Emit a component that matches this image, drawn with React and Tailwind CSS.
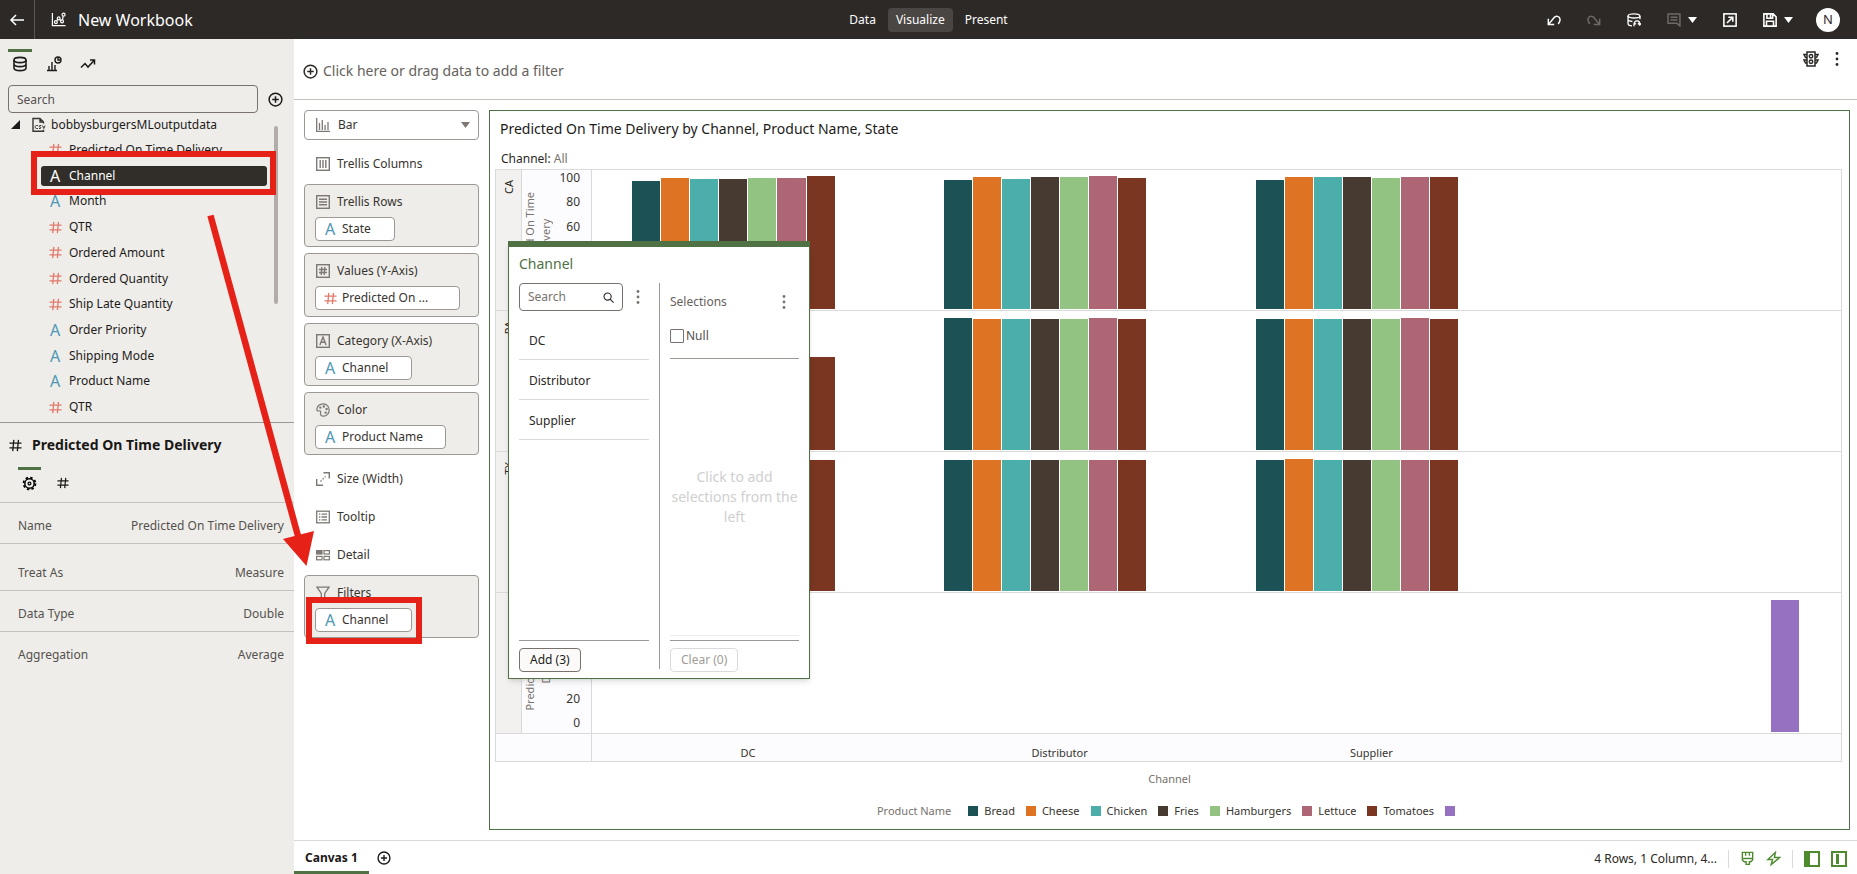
import React from "react";

/* ---------- icons ---------- */

function Icon({ size = 16, className = "", children, sw = 1.3, box = 16 }) {
  return (
    <svg
      width={size}
      height={size}
      viewBox={`0 0 ${box} ${box}`}
      fill="none"
      stroke="currentColor"
      strokeWidth={sw}
      className={`shrink-0 ${className}`}
      aria-hidden="true"
    >
      {children}
    </svg>
  );
}

const BackArrow = () => (
  <Icon sw={1.5}>
    <path d="M15 8H2M7 3 2 8l5 5" />
  </Icon>
);
const WorkbookIcon = () => (
  <Icon size={15} sw={1.3}>
    <path d="M1.500 1v13.500H15.500" />
    <circle cx="5.200" cy="10.800" r="1.500" />
    <circle cx="8.200" cy="6.800" r="1.500" />
    <circle cx="11.800" cy="10" r="1.500" />
    <circle cx="13.400" cy="2.800" r="1.600" />
    <path d="m5.900 9.400 1.400-1.500M9.200 7.900l1.600 1.200M12.200 8.500l.8-4" />
  </Icon>
);
const DatabaseIcon = () => (
  <Icon sw={1.6}>
    <ellipse cx="8" cy="4" rx="6" ry="2.6" />
    <path d="M2 4v8c0 1.500 2.700 2.600 6 2.600s6-1.100 6-2.600V4M2 8c0 1.500 2.700 2.600 6 2.600S14 9.500 14 8" />
  </Icon>
);
const VizTabIcon = () => (
  <Icon sw={1.4}>
    <path d="M1 14.500h10M3 14V10M6 14V6M9 14V9" />
    <circle cx="12" cy="4" r="3" />
    <path d="M12 1.500V4h2.500" />
  </Icon>
);
const TrendIcon = () => (
  <Icon sw={1.5}>
    <path d="m1 11.500 4-4 3 3.500 6-6.500M10 4h4.500v4.500" />
  </Icon>
);
const PlusCircle = ({ size = 15, className = "" }) => (
  <Icon size={size} sw={1.6} className={className}>
    <circle cx="8" cy="8" r="6.800" />
    <path d="M8 4.500v7M4.500 8h7" />
  </Icon>
);
const CsvFile = () => (
  <Icon sw={1.400} className="text-[#3a3632]">
    <path d="M4 14.300H2V1.500h7L12.500 5v1.500M9 1.500V5h3.500M4 14.300h8.500v-1.500" />
    <path d="M7 8.500H5.500c-1 0-1.300.6-1.300 1.500s.3 1.500 1.300 1.500H7M10.300 8.500H9c-1.200 0-1.200 1.500 0 1.500s1.200 1.500 0 1.500H8M11.500 8.500l1.300 3 1.300-3" strokeWidth="1" />
  </Icon>
);
const HashIcon = ({ size = 13, className = "" }) => (
  <Icon size={size} box={14} sw={1.400} className={className}>
    <path d="M.5 4.500h13M.5 9.500h13M5.200 1 4 13M10.200 1 9 13" />
  </Icon>
);
const GearIcon = () => (
  <Icon size={15} sw={1.600} className="text-black">
    <circle cx="8" cy="8" r="5" />
    <circle cx="8" cy="8" r="1.500" strokeWidth="1.300" />
    <circle cx="8" cy="8" r="6.400" strokeWidth="1.800" strokeDasharray="2.600 2.430" />
  </Icon>
);
const BarSmall = () => (
  <Icon size={14} sw={1.3} box={14}>
    <path d="M.7 0v13.300H14M3.500 12V5M6.300 12V2M9.100 12V7M12 12V4" />
  </Icon>
);
const TrellisCols = () => (
  <Icon size={14} box={14} sw={1.400}>
    <rect x=".7" y=".7" width="12.600" height="12.600" />
    <path d="M4.200 3v8M7 3v8M9.800 3v8" />
  </Icon>
);
const TrellisRows = () => (
  <Icon size={14} box={14} sw={1.400}>
    <rect x=".7" y=".7" width="12.600" height="12.600" />
    <path d="M3 4.200h8M3 7h8M3 9.800h8" />
  </Icon>
);
const ValuesIcon = () => (
  <Icon size={14} box={14} sw={1.400}>
    <rect x=".7" y=".7" width="12.600" height="12.600" />
    <path d="M3 5.500h8M3 8.500h8M5.800 3 5.200 11M8.800 3 8.200 11" />
  </Icon>
);
const CategoryIcon = () => (
  <Icon size={14} box={14} sw={1.400}>
    <rect x=".7" y=".7" width="12.600" height="12.600" />
    <path d="m3.900 11 3.100-8 3.100 8M5 8.300h4" />
  </Icon>
);
const PaletteIcon = () => (
  <Icon size={14} box={14} sw={1.200}>
    <path d="M7.200.8C3.500.8.8 3.500.8 6.600c0 1.600 1.500 1.500 2.400 1.200 1.200-.3 1.800.6 1.400 1.800-.6 1.900.5 3.600 2.800 3.600 3.300 0 5.800-2.900 5.800-6.200S10.600.8 7.200.8Z" />
    <circle cx="4.300" cy="4.600" r=".6" />
    <circle cx="7.800" cy="3.500" r=".6" />
    <circle cx="10.600" cy="6" r=".6" />
    <circle cx="9.600" cy="9.600" r=".6" />
  </Icon>
);
const SizeIcon = () => (
  <Icon size={14} box={14} sw={1.400}>
    <path d="M.7 7v6.300H7M7.500.7h5.800v5.800" />
    <path d="m4.500 9.500 5-5" strokeDasharray="1.500 1.500" />
  </Icon>
);
const TooltipIcon = () => (
  <Icon size={14} box={14} sw={1.300}>
    <rect x=".7" y="1.200" width="12.600" height="11.600" />
    <path d="M3 4.200h1.300M3 7h1.300M3 9.800h1.300M5.500 4.200H11M5.500 7H11M5.500 9.800H11" />
  </Icon>
);
const DetailIcon = () => (
  <Icon size={14} box={14} sw={1.200}>
    <rect x=".6" y="2.600" width="5.400" height="3.400" fill="currentColor" />
    <rect x="8" y="2.600" width="5.400" height="3.400" />
    <rect x=".6" y="8.400" width="5.400" height="3.400" />
    <rect x="8" y="8.400" width="5.400" height="3.400" />
  </Icon>
);
const FilterIcon = () => (
  <Icon size={14} box={14} sw={1.300}>
    <path d="M1 1.200h12L8.700 7.500v4L5.300 13.500v-6Z" />
  </Icon>
);
const Kebab = ({ className = "" }) => (
  <svg width="4" height="16" viewBox="0 0 4 16" fill="currentColor" className={className} aria-hidden="true">
    <circle cx="2" cy="2.500" r="1.400" />
    <circle cx="2" cy="8" r="1.400" />
    <circle cx="2" cy="13.500" r="1.400" />
  </svg>
);
const TrafficLight = () => (
  <Icon size={16} sw={1.500}>
    <path d="M4 1h8v14H4zM4 3.500H1l1.500 3H4M4 9H1l1.500 3H4M12 3.500h3l-1.500 3H12M12 9h3l-1.500 3H12" />
    <circle cx="8" cy="5.200" r="1.700" />
    <circle cx="8" cy="10.800" r="1.700" />
  </Icon>
);
const UndoIcon = ({ className = "" }) => (
  <Icon size={14} sw={1.700} className={className}>
    <path d="M1.500 6.500v6.700h6.700M2 12.700 8.200 5.200c2-2.500 6-1.600 6.600 1.500.4 2-.5 3.900-2 5.800" />
  </Icon>
);
const CaretDown = ({ className = "" }) => (
  <svg width="9" height="6" viewBox="0 0 10 6" preserveAspectRatio="none" fill="currentColor" className={className} aria-hidden="true">
    <path d="M0 0h10L5 6z" />
  </svg>
);
const RefreshDataIcon = () => (
  <Icon size={14} sw={1.500}>
    <ellipse cx="8" cy="3.300" rx="6.800" ry="2.400" />
    <path d="M1.200 3.300v9c0 1.200 2 2.200 4.500 2.400M14.800 3.300V7M1.200 7.500c0 1.200 2 2 5 2.200" />
    <path d="M8 15.200V12.500h2.500M8.300 12c.4-2.300 2-3.200 3.500-3 1.700.2 2.700 1.400 2.700 3.300M12.500 11.800l2 2 1.500-2" />
  </Icon>
);
const NoteIcon = () => (
  <Icon size={14} sw={1.700}>
    <path d="M1.200 1.200h13.600v13.600L11.500 11.800H1.200z" />
    <path d="M4 4.800h8M4 8h8" />
  </Icon>
);
const ExportIcon = () => (
  <Icon size={14} sw={1.800}>
    <rect x="1" y="1" width="14" height="14" />
    <path d="M4.500 11.500 11 5M6 4.800h5.200V10" />
  </Icon>
);
const SaveIcon = () => (
  <Icon size={14} sw={1.800}>
    <path d="M1 1h10.500L15 4.500V15H1zM4.500 1v5h6.500V1M4 15V9.500h8V15M8.600 2v3" />
  </Icon>
);
const SearchIcon = () => (
  <Icon size={11} box={12} sw={1.200} className="text-[#2b2825]">
    <circle cx="5" cy="5" r="3.900" />
    <path d="m7.800 7.800 3.700 3.700" />
  </Icon>
);
const BrushIcon = () => (
  <Icon size={15} sw={1.500}>
    <path d="M2.500 1.500h11v8L11.500 11.500H10v2.800H6.500v-2.800h-2L2.500 9.500zM2.500 8h11M6 1.500V5M10 1.500V5" />
  </Icon>
);
const BoltIcon = () => (
  <Icon size={15} sw={1.500}>
    <path d="M10 1.500 2 9h5l-1.500 5.500L14.500 7H9z" />
  </Icon>
);

/* ---------- data ---------- */

const TREE = [
  ["#", "Predicted On Time Delivery"],
  ["A", "Channel", true],
  ["A", "Month"],
  ["#", "QTR"],
  ["#", "Ordered Amount"],
  ["#", "Ordered Quantity"],
  ["#", "Ship Late Quantity"],
  ["A", "Order Priority"],
  ["A", "Shipping Mode"],
  ["A", "Product Name"],
  ["#", "QTR"],
];

const PRODUCTS = [
  ["Bread", "#1c5156"],
  ["Cheese", "#de7423"],
  ["Chicken", "#4caeab"],
  ["Fries", "#473a31"],
  ["Hamburgers", "#92c382"],
  ["Lettuce", "#af6674"],
  ["Tomatoes", "#7a3620"],
  ["", "#9671c1"],
];

const AXIS_MAX = 103.7;

const ROWS = [
  {
    state: "CA",
    groups: [
      [95.5, 97.8, 97, 97, 97.8, 97.8, 99.3, 0],
      [96.3, 98.5, 97, 98.5, 98.5, 99.3, 97.8, 0],
      [96.3, 98.5, 98.5, 98.5, 97.8, 98.5, 98.5, 0],
      [0, 0, 0, 0, 0, 0, 0, 0],
    ],
  },
  {
    state: "PA",
    groups: [
      [97.8, 97.8, 97.8, 97.8, 97.8, 97.8, 69.4, 0],
      [98.5, 97.8, 97.8, 97.8, 97.8, 98.5, 97.8, 0],
      [97.8, 97.8, 97.8, 97.8, 97.8, 98.5, 97.8, 0],
      [0, 0, 0, 0, 0, 0, 0, 0],
    ],
  },
  {
    state: "TX",
    groups: [
      [97.8, 97.8, 97.8, 97.8, 97.8, 97.8, 97.8, 0],
      [97.8, 97.8, 97.8, 97.8, 97.8, 97.8, 97.8, 0],
      [97.8, 98.5, 97.8, 97.8, 97.8, 97.8, 97.8, 0],
      [0, 0, 0, 0, 0, 0, 0, 0],
    ],
  },
  {
    state: "",
    groups: [
      [0, 0, 0, 0, 0, 0, 0, 0],
      [0, 0, 0, 0, 0, 0, 0, 0],
      [0, 0, 0, 0, 0, 0, 0, 0],
      [0, 0, 0, 0, 0, 0, 0, 98.5],
    ],
  },
];

/* ---------- parts ---------- */

function TypeMark({ kind, inverse }) {
  if (kind === "#")
    return (
      <span className="flex w-[14px] shrink-0 justify-center">
        <HashIcon className="text-[#e27a6b]" />
      </span>
    );
  return (
    <span
      aria-hidden="true"
      className={`w-[14px] shrink-0 text-center text-base leading-4 ${inverse ? "text-white" : "text-[#4f97b4]"}`}
    >
      A
    </span>
  );
}

function Header() {
  return (
    <header className="flex h-[39px] shrink-0 items-center bg-[#2d2926] text-white">
      <div className="flex h-full flex-1 items-center">
        <button aria-label="Back" className="flex h-full w-[35px] items-center justify-center border-r border-[#5b5652]">
          <BackArrow />
        </button>
        <div className="flex items-center gap-3 pl-4">
          <WorkbookIcon />
          <h1 className="text-base leading-5">New Workbook</h1>
        </div>
      </div>
      <nav className="flex items-center gap-1 text-xs">
        <button className="h-6 px-2">Data</button>
        <button className="h-6 rounded-sm bg-[#4a4643] px-2">Visualize</button>
        <button className="h-6 px-2">Present</button>
      </nav>
      <div className="flex flex-1 items-center justify-end gap-[23px]">
        <div className="flex items-center gap-[26px]">
          <button aria-label="Undo"><UndoIcon /></button>
          <button aria-label="Redo" className="text-[#6f6a66]"><UndoIcon className="-scale-x-100" /></button>
          <button aria-label="Refresh data"><RefreshDataIcon /></button>
          <button aria-label="Notes" className="flex items-center gap-[7px]">
            <span className="text-[#6f6a66]"><NoteIcon /></span>
            <CaretDown />
          </button>
          <button aria-label="Export"><ExportIcon /></button>
          <button aria-label="Save" className="flex items-center gap-[7px]">
            <SaveIcon />
            <CaretDown />
          </button>
        </div>
        <button className="mr-[17px] flex size-6 items-center justify-center rounded-full bg-white text-[13px] text-[#2d2926]">N</button>
      </div>
    </header>
  );
}

function Property({ label, value, className = "" }) {
  return (
    <div className={`flex items-end justify-between pr-[10px] pb-[7px] pl-[18px] text-xs leading-5 text-[#55514d] ${className}`}>
      <dt>{label}</dt>
      <dd>{value}</dd>
    </div>
  );
}

function Sidebar() {
  return (
    <aside className="flex w-[294px] shrink-0 flex-col bg-[#eeedea]">
      <section className="flex h-[384px] flex-col border-b border-[#9b9793] px-2">
        <div className="mt-[10px] flex gap-[10px]">
          <button aria-label="Data" className="flex h-[27px] w-6 items-center justify-center border-t-[3px] border-[#4f7144]">
            <DatabaseIcon />
          </button>
          <button aria-label="Visualizations" className="flex h-[27px] w-6 items-center justify-center pt-[3px]">
            <VizTabIcon />
          </button>
          <button aria-label="Analytics" className="flex h-[27px] w-6 items-center justify-center pt-[3px]">
            <TrendIcon />
          </button>
        </div>
        <div className="mt-[9px] flex items-center gap-[10px]">
          <input
            aria-label="Search data"
            placeholder="Search"
            className="h-7 w-[250px] rounded border border-[#77726d] bg-transparent px-2 text-xs placeholder:text-[#55514d]"
          />
          <button aria-label="Add data"><PlusCircle /></button>
        </div>
        <div className="flex min-h-0 flex-1">
          <div className="flex flex-1 flex-col text-xs text-[#1d1b19]">
            <div className="flex h-[23px] items-center gap-[11px] pl-[3px]">
              <svg width="9" height="9" viewBox="0 0 9 9" fill="currentColor" aria-hidden="true"><path d="M9 0v9H0z" /></svg>
              <span className="flex items-center gap-1"><CsvFile />bobbysburgersMLoutputdata</span>
            </div>
            <ul className="flex flex-1 flex-col pt-px pb-[2px] pl-[33px]">
              {TREE.map(([kind, name, selected], i) => (
                <li key={i} className="flex flex-1 items-center">
                  <button
                    className={`flex h-5 w-[226px] items-center gap-[7px] rounded-[3px] pl-[7px] text-left ${selected ? "bg-[#312e29] text-white" : ""}`}
                  >
                    <TypeMark kind={kind} inverse={selected} />
                    {name}
                  </button>
                </li>
              ))}
            </ul>
          </div>
          <div className="mt-[13px] mr-2 h-[178px] w-1 rounded-sm bg-[#b3adaa]" />
        </div>
      </section>

      <section className="flex-1">
        <div className="flex items-center gap-[10px] pt-3 pl-[9px] text-[#1a1816]">
          <HashIcon />
          <h2 className="text-sm leading-5 font-bold">Predicted On Time Delivery</h2>
        </div>
        <div className="mt-3 flex gap-[10px] pl-[18px]">
          <button aria-label="General" className="flex h-[35px] w-[23px] justify-center border-t-[3px] border-[#4f7144] pt-1.5">
            <GearIcon />
          </button>
          <button aria-label="Number format" className="flex h-[35px] w-[23px] justify-center pt-[10px]">
            <HashIcon size={12} />
          </button>
        </div>
        <dl className="border-t border-[#c6c3bf]">
          <Property label="Name" value="Predicted On Time Delivery" className="h-[41px] border-b border-[#c6c3bf]" />
          <Property label="Treat As" value="Measure" className="h-[47px] border-b border-[#c6c3bf]" />
          <Property label="Data Type" value="Double" className="h-[41px] border-b border-[#c6c3bf]" />
          <Property label="Aggregation" value="Average" className="h-[40px]" />
        </dl>
      </section>
    </aside>
  );
}

function Slot({ icon, label, chip }) {
  if (!chip) {
    return (
      <div className="flex h-8 items-center gap-[7px] pt-[3px] pl-3 text-[#38342f]">
        <span className="text-[#7d7874]">{icon}</span>
        {label}
      </div>
    );
  }
  const [kind, name, width] = chip;
  return (
    <div className="flex min-h-[63px] flex-1 flex-col gap-[5px] rounded border border-[#9d9893] bg-[#eeedea] pt-[7px] pl-[10px] text-[#38342f]">
      <div className="flex h-5 items-center gap-[7px] pl-[1px]">
        <span className="text-[#7d7874]">{icon}</span>
        {label}
      </div>
      <button className={`flex h-6 items-center gap-[5px] rounded border border-[#9d9893] bg-white pl-[7px] text-left ${width}`}>
        <TypeMark kind={kind} />
        {name}
      </button>
    </div>
  );
}

function Grammar() {
  return (
    <div className="flex w-[175px] shrink-0 flex-col gap-[6px] text-xs">
      <label className="relative flex h-[30px] items-center text-[#7d7874]">
        <span className="absolute left-3"><BarSmall /></span>
        <select
          aria-label="Visualization type"
          className="h-full w-full appearance-none rounded border border-[#9d9893] bg-white pl-[33px] text-xs text-[#38342f]"
        >
          <option>Bar</option>
        </select>
        <CaretDown className="pointer-events-none absolute right-[9px]" />
      </label>
      <Slot icon={<TrellisCols />} label="Trellis Columns" />
      <div className="flex h-[271px] flex-col gap-[6px]">
        <Slot icon={<TrellisRows />} label="Trellis Rows" chip={["A", "State", "w-[80px]"]} />
        <Slot icon={<ValuesIcon />} label="Values (Y-Axis)" chip={["#", "Predicted On ...", "w-[145px]"]} />
        <Slot icon={<CategoryIcon />} label="Category (X-Axis)" chip={["A", "Channel", "w-[97px]"]} />
        <Slot icon={<PaletteIcon />} label="Color" chip={["A", "Product Name", "w-[131px]"]} />
      </div>
      <Slot icon={<SizeIcon />} label="Size (Width)" />
      <Slot icon={<TooltipIcon />} label="Tooltip" />
      <Slot icon={<DetailIcon />} label="Detail" />
      <div className="flex">
        <Slot icon={<FilterIcon />} label="Filters" chip={["A", "Channel", "w-[97px]"]} />
      </div>
    </div>
  );
}

function BarGroup({ values }) {
  return (
    <div className="flex h-full flex-1 items-end gap-px px-10">
      {values.map((v, i) => (
        <div key={i} className="flex-1" style={{ height: `${(v / AXIS_MAX) * 100}%`, background: PRODUCTS[i][1] }} />
      ))}
    </div>
  );
}

function ChartRow({ state, groups }) {
  return (
    <div className="flex min-h-[120px] flex-1 border-b border-[#dadada]">
      <div className="flex w-[26px] shrink-0 justify-center border-r border-[#dadada] bg-[#f2f1ef] pt-[10px]">
        <span className="h-fit rotate-180 text-[11px] leading-4 text-[#2b2825] [writing-mode:vertical-rl]">{state}</span>
      </div>
      <div className="flex w-[70px] shrink-0 items-center justify-between border-r border-[#dadada] bg-[#fcfcfe] pr-[11px]">
        <span className="rotate-180 text-center text-[11px] leading-4 text-[#77726d] [writing-mode:vertical-rl]">
          Predicted On Time
          <br />
          Delivery
        </span>
        <div className="flex h-full flex-col justify-between pb-[3px] text-right text-xs leading-[15px] text-[#38342f]">
          {[100, 80, 60, 40, 20, 0].map((t) => (
            <span key={t}>{t}</span>
          ))}
        </div>
      </div>
      <div className="flex flex-1 items-end pr-[2px] pb-px">
        {groups.map((g, i) => (
          <BarGroup key={i} values={g} />
        ))}
      </div>
    </div>
  );
}

function Chart() {
  return (
    <section className="relative flex flex-1 flex-col border border-[#4f7144] px-[5px] text-[11px]">
      <h2 className="pt-2 pl-[5px] text-sm leading-5 text-[#1d1b19]">
        Predicted On Time Delivery by Channel, Product Name, State
      </h2>
      <p className="mt-[11px] mb-[1px] pl-[6px] text-xs leading-[18px] text-[#2b2825]">
        Channel: <span className="text-[#77726d]">All</span>
      </p>
      <div className="mr-[2px] flex flex-1 flex-col border border-[#dadada]">
        {ROWS.map((r, i) => (
          <ChartRow key={i} {...r} />
        ))}
        <div className="flex h-[27px] bg-[#fcfcfe] pr-[2px] text-[#38342f]">
          <div className="w-24 shrink-0 border-r border-[#dadada]" />
          {["DC", "Distributor", "Supplier", ""].map((c, i) => (
            <div key={i} className="flex-1 pt-[11px] text-center leading-4">{c}</div>
          ))}
        </div>
      </div>
      <p className="mt-[9px] text-center leading-4 text-[#77726d]">Channel</p>
      <div className="mt-4 mb-[10px] flex items-center justify-center gap-[11px] pr-[7px] leading-4 text-[#38342f]">
        <span className="mr-1.5 text-[#77726d]">Product Name</span>
        {PRODUCTS.map(([name, color]) => (
          <span key={color} className="flex items-center gap-1.5">
            <span className="size-[10px]" style={{ background: color }} />
            {name}
          </span>
        ))}
      </div>
      <FilterPopup />
    </section>
  );
}

function FilterPopup() {
  return (
    <div
      role="dialog"
      aria-label="Channel filter"
      className="absolute top-[130px] left-[18px] flex h-[438px] w-[302px] flex-col border border-t-[6px] border-[#4f7144] bg-white px-[10px] pb-[6px] text-xs shadow-md"
    >
      <h3 className="pt-[7px] text-sm leading-5 text-[#4f7144]">Channel</h3>
      <div className="mt-[9px] flex flex-1">
        <div className="flex w-[130px] shrink-0 flex-col">
          <div className="flex items-center justify-between">
            <label className="flex h-7 w-[104px] items-center rounded border border-[#77726d] px-2">
              <input
                aria-label="Search values"
                placeholder="Search"
                className="w-[75px] bg-transparent placeholder:text-[#77726d]"
              />
              <SearchIcon />
            </label>
            <button aria-label="Search options" className="pr-[9px] pl-2 text-[#77726d]"><Kebab /></button>
          </div>
          <ul className="mt-[9px] text-[#2b2825]">
            {["DC", "Distributor", "Supplier"].map((n) => (
              <li key={n} className="flex h-10 items-center border-b border-[#dadada] pt-[2px] pl-[10px]">{n}</li>
            ))}
          </ul>
          <div className="mt-auto flex border-t border-[#9d9893] pt-[7px]">
            <button className="h-6 rounded border border-[#77726d] bg-[#fbfaf8] px-[10px] text-[#1d1b19]">Add (3)</button>
          </div>
        </div>
        <div className="mb-[3px] ml-[10px] w-px bg-[#9d9893]" />
        <div className="ml-[10px] flex flex-1 flex-col">
          <div className="mt-[11px] flex h-4 items-center justify-between text-[#66615c]">
            Selections
            <button aria-label="Selection options" className="mr-[13px] text-[#77726d]"><Kebab /></button>
          </div>
          <label className="mt-4 flex h-5 items-center gap-[2px] text-[#55514d]">
            <input type="checkbox" className="size-[14px] appearance-none rounded-[1px] border border-[#77726d] bg-white" />
            Null
          </label>
          <div className="mt-[12px] border-t border-[#9d9893]" />
          <p className="flex flex-1 items-center justify-center text-center text-sm leading-5 text-[#cfcfcf]">
            Click to add selections from the left
          </p>
          <div className="border-t border-[#ececec]" />
          <div className="mt-1 flex border-t border-[#9d9893] pt-[7px]">
            <button disabled className="h-6 rounded border border-[#dadada] px-[10px] text-[#a09c98]">Clear (0)</button>
          </div>
        </div>
      </div>
    </div>
  );
}

function Footer() {
  return (
    <footer className="flex h-[34px] shrink-0 items-stretch justify-between border-t border-[#dadada] bg-white">
      <div className="flex items-stretch gap-2">
        <button className="border-b-[3px] border-[#4f7144] px-[11px] pt-[4px] text-xs font-bold text-[#1a1816]">Canvas 1</button>
        <button aria-label="Add canvas"><PlusCircle size={14} /></button>
      </div>
      <div className="flex items-center gap-[11px] pt-[2px] pr-[10px] text-[#4f8a2f]">
        <span className="text-xs text-[#2b2825]">4 Rows, 1 Column, 4...</span>
        <span className="h-[18px] w-px bg-[#dadada]" />
        <button aria-label="Brushing"><BrushIcon /></button>
        <button aria-label="Auto apply"><BoltIcon /></button>
        <span className="h-[18px] w-px bg-[#dadada]" />
        <button aria-label="Toggle data panel" className="size-4 border-2 border-l-[6px] border-current" />
        <button aria-label="Toggle grammar panel" className="flex size-4 items-center border-2 border-current pl-[3px]">
          <span className="h-[10px] w-[3px] bg-current" />
        </button>
      </div>
    </footer>
  );
}

/* Red callouts that lead from the selected column to the Filters drop target. */
function Callouts() {
  return (
    <div className="pointer-events-none absolute inset-0">
      <div className="absolute top-[151px] left-[31px] h-[44px] w-[245px] border-[6px] border-[#e62118]" />
      <div className="absolute top-[597px] left-[306px] h-[47px] w-[116px] border-[6px] border-[#e62118]" />
      <svg className="absolute top-[210px] left-[200px]" width="130" height="360" viewBox="0 0 130 360" aria-hidden="true">
        <path d="M10.500 5.500 98 326" stroke="#e62118" strokeWidth="6.500" fill="none" />
        <path d="m83 329 31-8-7.500 35z" fill="#e62118" />
      </svg>
    </div>
  );
}

export default function App() {
  return (
    <div className="relative flex min-h-screen flex-col bg-white font-['Noto_Sans',sans-serif] text-[#1d1b19]">
      <Header />
      <div className="flex flex-1">
        <Sidebar />
        <main className="flex min-w-0 flex-1 flex-col">
          <div className="flex h-[61px] items-start justify-between border-b border-[#c6c3bf] pr-[18px]">
            <button className="flex items-center gap-[5px] pt-[22px] pl-[9px] text-sm leading-5 text-[#66615c]">
              <PlusCircle className="text-[#2b2825]" />
              Click here or drag data to add a filter
            </button>
            <div className="flex items-center gap-4 pt-3 text-[#2b2825]">
              <button aria-label="Filter limits"><TrafficLight /></button>
              <button aria-label="Canvas menu"><Kebab /></button>
            </div>
          </div>
          <div className="flex flex-1 gap-[10px] pt-[10px] pr-[7px] pb-[10px] pl-[10px]">
            <Grammar />
            <Chart />
          </div>
          <Footer />
        </main>
      </div>
      <Callouts />
    </div>
  );
}
